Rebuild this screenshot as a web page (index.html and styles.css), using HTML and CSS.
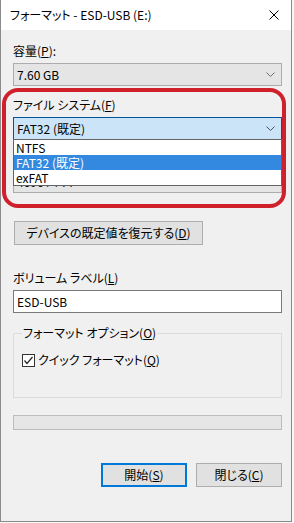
FILE: index.html
```html
<!DOCTYPE html>
<html lang="ja">
<head>
  <meta charset="UTF-8" />
  <meta name="viewport" content="width=device-width, initial-scale=1.0"/>
  <title>フォーマット - ESD-USB (E:)</title>
  <link rel="stylesheet" href="styles.css">
</head>
<body>

  <div class="window">
    <div class="titlebar">
      <span class="title">フォーマット - ESD-USB (E:)</span>
      <svg class="close" width="10" height="10" viewBox="0 0 10 10">
        <path d="M0.5 0.5 L9.5 9.5 M9.5 0.5 L0.5 9.5" stroke="#000" stroke-width="1" fill="none"/>
      </svg>
    </div>

    <div class="content">
      <div class="label">容量(<u>P</u>):</div>
      <div class="combo">
        <span>7.60 GB</span>
        <svg class="chevron" width="9" height="5" viewBox="0 0 9 5"><path d="M0.5 0.5 L4.5 4.5 L8.5 0.5" stroke="#707070" fill="none"/></svg>
      </div>

      <div class="fs-field">
        <div class="label first">ファイル システム(<u>F</u>)</div>
        <div class="combo open">
          <span>FAT32 (既定)</span>
          <svg class="chevron" width="9" height="5" viewBox="0 0 9 5"><path d="M0.5 0.5 L4.5 4.5 L8.5 0.5" stroke="#505050" fill="none"/></svg>
        </div>
        <!-- allocation unit label sits fully under the open list -->
        <div class="label small-gap"></div>
        <div class="combo">
          <span>4096 バイト</span>
        </div>

        <ul class="dropdown">
          <li>NTFS</li>
          <li class="selected">FAT32 (既定)</li>
          <li>exFAT</li>
        </ul>
        <div class="highlight"></div>
      </div>

      <button class="btn restore">デバイスの既定値を復元する(<u>D</u>)</button>

      <div class="label volume">ボリューム ラベル(<u>L</u>)</div>
      <div class="textbox">ESD-USB</div>

      <fieldset class="group">
        <legend>フォーマット オプション(<u>O</u>)</legend>
        <label class="check">
          <span class="box">
            <svg width="11" height="11" viewBox="0 0 11 11"><path d="M1.5 5.5 L4 8.5 L9.5 2" stroke="#222" stroke-width="1.2" fill="none"/></svg>
          </span>
          <span>クイック フォーマット(<u>Q</u>)</span>
        </label>
      </fieldset>

      <div class="progress"></div>

      <div class="actions">
        <button class="btn default">開始(<u>S</u>)</button>
        <button class="btn">閉じる(<u>C</u>)</button>
      </div>
    </div>
  </div>

</body>
</html>
```

FILE: styles.css
```css
body {
  margin: 0;
  background: #f7f7f7;
  font-family: "Noto Sans CJK JP", sans-serif;
  font-size: 12px;
  line-height: 16px;
  font-feature-settings: "palt";
  color: #000;
}

.window {
  width: 290px;
  height: 521px;
  background: #f0f0f0;
  border: 1px solid #8a8a8a;
  border-top: none;
}

.titlebar {
  height: 30px;
  background: #fff;
  display: flex;
  align-items: center;
  justify-content: space-between;
  padding: 0 8px 0 9px;
}

.close {
  margin-right: 4px;
}

.content {
  padding: 13px 9px 0 12px;
}

.label {
  height: 16px;
}

.label.first {
  margin-top: 11px;
}

.label.small-gap {
  margin-top: 10px;
}

.label.volume {
  margin-top: 25px;
}

.combo {
  box-sizing: border-box;
  height: 23px;
  margin-top: 4px;
  padding: 0 6px 0 3px;
  display: flex;
  align-items: center;
  justify-content: space-between;
  background: #e5e5e5;
  border: 1px solid #acacac;
}

.combo.open {
  background: #cce4f7;
  border-color: #005499;
}

.fs-field {
  position: relative;
}

.dropdown {
  position: absolute;
  top: 42px;
  left: 0;
  right: 0;
  margin: 0;
  padding: 0;
  list-style: none;
  background: #fff;
  border: 1px solid #646464;
}

.dropdown li {
  height: 15px;
  line-height: 15px;
  padding-left: 2px;
}

.dropdown li.selected {
  background: #3388e0;
  color: #fff;
}

.highlight {
  position: absolute;
  top: -9px;
  left: -11px;
  width: 276px;
  height: 112px;
  border: 4px solid #d0202c;
  border-radius: 16px;
  pointer-events: none;
}

.btn {
  box-sizing: border-box;
  height: 24px;
  padding: 0;
  font: inherit;
  color: #000;
  background: #e1e1e1;
  border: 1px solid #adadad;
}

.restore {
  display: block;
  width: 189px;
  margin: 28px 0 0 1px;
}

.textbox {
  box-sizing: border-box;
  height: 23px;
  margin-top: 4px;
  padding: 0 3px;
  line-height: 21px;
  background: #fff;
  border: 1px solid #7a7a7a;
}

.group {
  box-sizing: border-box;
  height: 73px;
  margin: 12px 0 0;
  padding: 0 8px;
  border: 1px solid #dcdcdc;
}

.group legend {
  padding: 0 1px;
  line-height: 16px;
}

.check {
  display: flex;
  align-items: center;
  gap: 3px;
  margin-top: 11px;
}

.box {
  box-sizing: border-box;
  width: 13px;
  height: 13px;
  display: flex;
  align-items: center;
  justify-content: center;
  background: #fff;
  border: 1px solid #333;
}

.progress {
  box-sizing: border-box;
  height: 15px;
  margin-top: 17px;
  background: #e6e6e6;
  border: 1px solid #bcbcbc;
}

.actions {
  display: flex;
  justify-content: flex-end;
  gap: 9px;
  margin-top: 33px;
}

.actions .btn {
  width: 86px;
}

.btn.default {
  border: 2px solid #0078d7;
}
```
